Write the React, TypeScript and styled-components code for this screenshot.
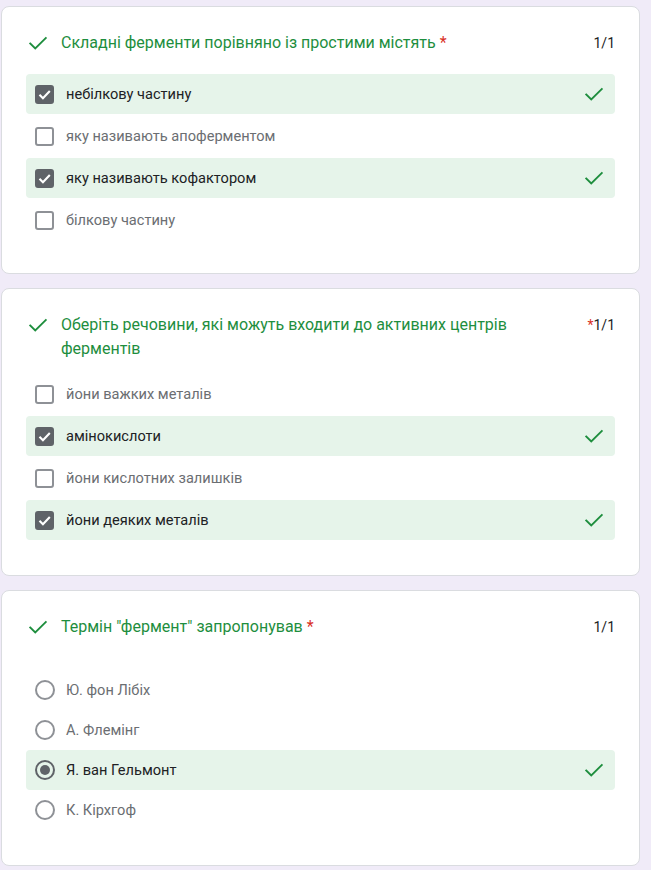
import React from "react";
import styled, { createGlobalStyle } from "styled-components";

const Global = createGlobalStyle`
  html, body { margin: 0; padding: 0; background: #f0ebf8; }
  body { font-family: Roboto, "Noto Sans", Arial, sans-serif; }
`;

const Page = styled.div`
  padding: 6px 0 8px 1px;
  display: flex;
  flex-direction: column;
  gap: 14px;
  width: 639px;
`;

const Card = styled.section`
  background: #fff;
  border: 1px solid #dadce0;
  border-radius: 8px;
  padding: 24px;
`;

const Header = styled.div<{ $gap: number }>`
  display: flex;
  align-items: flex-start;
  margin-bottom: ${(p) => p.$gap}px;
`;

const TitleIcon = styled.span`
  width: 24px;
  height: 24px;
  flex: 0 0 24px;
  margin-right: 11px;
  display: flex;
  align-items: center;
  justify-content: center;
  color: #1e8e3e;
`;

const Title = styled.div`
  flex: 1;
  font-size: 16px;
  line-height: 24px;
  color: #1e8e3e;
  padding-right: 24px;
`;

const Star = styled.span`
  color: #d93025;
`;

const Points = styled.div`
  font-size: 14px;
  line-height: 24px;
  color: #202124;
  white-space: nowrap;
`;

const List = styled.div<{ $pitch: number; $bottom: number }>`
  display: flex;
  flex-direction: column;
  gap: ${(p) => p.$pitch}px;
  padding-bottom: ${(p) => p.$bottom}px;
`;

const Row = styled.div<{ $correct: boolean }>`
  display: flex;
  align-items: center;
  height: 40px;
  padding: 0 10px 0 9px;
  border-radius: 4px;
  background: ${(p) => (p.$correct ? "#e6f4ea" : "transparent")};
`;

const Box = styled.span<{ $checked: boolean }>`
  width: 19px;
  height: 19px;
  box-sizing: border-box;
  border-radius: 3px;
  border: 2px solid ${(p) => (p.$checked ? "#5f6368" : "#8e9196")};
  background: ${(p) => (p.$checked ? "#5f6368" : "#fff")};
  display: flex;
  align-items: center;
  justify-content: center;
  flex: 0 0 19px;
  margin-right: 12px;
`;

const Radio = styled.span<{ $checked: boolean }>`
  width: 20px;
  height: 20px;
  box-sizing: border-box;
  border-radius: 50%;
  border: 2px solid ${(p) => (p.$checked ? "#5f6368" : "#8e9196")};
  display: flex;
  align-items: center;
  justify-content: center;
  flex: 0 0 20px;
  margin-right: 11px;
  &::after {
    content: "";
    width: 10px;
    height: 10px;
    border-radius: 50%;
    background: ${(p) => (p.$checked ? "#5f6368" : "transparent")};
  }
`;

const Label = styled.span<{ $checked: boolean }>`
  flex: 1;
  font-size: 14.6px;
  line-height: 20px;
  color: ${(p) => (p.$checked ? "#202124" : "#6b6e72")};
`;

const RowIcon = styled.span`
  display: flex;
  color: #1e8e3e;
`;

const Tick = ({ size = 20 }: { size?: number }) => (
  <svg width={size} height={size} viewBox="0 0 24 24" fill="none">
    <path d="M3.5 12.5 L9 18 L20.5 6.5" stroke="currentColor" strokeWidth="2" strokeLinecap="square" />
  </svg>
);

const BoxTick = () => (
  <svg width="15" height="15" viewBox="0 0 24 24" fill="none">
    <path d="M4 12.5 L9.5 18 L20.5 6.5" stroke="#fff" strokeWidth="3.4" />
  </svg>
);

type Opt = { text: string; checked: boolean };
type Q = {
  title: string;
  starInPoints?: boolean;
  kind: "check" | "radio";
  gap: number;
  pitch: number;
  bottom: number;
  options: Opt[];
};

const questions: Q[] = [
  {
    title: "Складні ферменти порівняно із простими містять",
    kind: "check",
    gap: 19,
    pitch: 2,
    bottom: 9,
    options: [
      { text: "небілкову частину", checked: true },
      { text: "яку називають апоферментом", checked: false },
      { text: "яку називають кофактором", checked: true },
      { text: "білкову частину", checked: false },
    ],
  },
  {
    title: "Оберіть речовини, які можуть входити до активних центрів ферментів",
    starInPoints: true,
    kind: "check",
    gap: 13,
    pitch: 2,
    bottom: 11,
    options: [
      { text: "йони важких металів", checked: false },
      { text: "амінокислоти", checked: true },
      { text: "йони кислотних залишків", checked: false },
      { text: "йони деяких металів", checked: true },
    ],
  },
  {
    title: 'Термін "фермент" запропонував',
    kind: "radio",
    gap: 31,
    pitch: 0,
    bottom: 11,
    options: [
      { text: "Ю. фон Лібіх", checked: false },
      { text: "А. Флемінг", checked: false },
      { text: "Я. ван Гельмонт", checked: true },
      { text: "К. Кірхгоф", checked: false },
    ],
  },
];

export default function App() {
  return (
    <>
      <Global />
      <Page>
        {questions.map((q, i) => (
          <Card key={i}>
            <Header $gap={q.gap}>
              <TitleIcon>
                <Tick size={22} />
              </TitleIcon>
              <Title>
                {q.title}
                {!q.starInPoints && <Star> *</Star>}
              </Title>
              <Points>
                {q.starInPoints && <Star>*</Star>}1/1
              </Points>
            </Header>
            <List $pitch={q.pitch} $bottom={q.bottom}>
              {q.options.map((o, j) => (
                <Row key={j} $correct={o.checked}>
                  {q.kind === "check" ? (
                    <Box $checked={o.checked}>{o.checked && <BoxTick />}</Box>
                  ) : (
                    <Radio $checked={o.checked} />
                  )}
                  <Label $checked={o.checked}>{o.text}</Label>
                  {o.checked && (
                    <RowIcon>
                      <Tick size={22} />
                    </RowIcon>
                  )}
                </Row>
              ))}
            </List>
          </Card>
        ))}
      </Page>
    </>
  );
}
